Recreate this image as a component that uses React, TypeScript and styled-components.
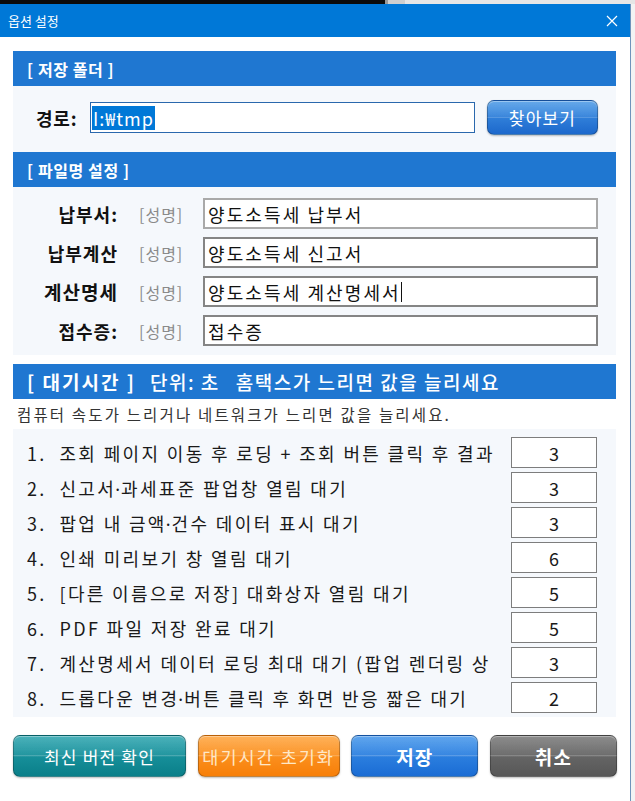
import React from "react";
import styled, { createGlobalStyle } from "styled-components";

const Global = createGlobalStyle`
  html, body { margin: 0; padding: 0; background: #f0f0f0; overflow: hidden; }
  body { font-family: "Noto Sans CJK KR", "Noto Sans", sans-serif; }
  * { box-sizing: border-box; }
`;

const KR = `"Noto Sans CJK KR", "Noto Sans", sans-serif`;

const Screen = styled.div`
  width: 635px;
  height: 801px;
  display: flex;
  flex-direction: column;
  background: #f3f3f3;
`;

const TopStrip = styled.div`
  height: 4px;
  display: flex;
`;

const StripDark = styled.div`
  width: 385px;
  background: #0b0b0b;
`;

const StripLight = styled.div`
  flex: 1;
  background: linear-gradient(90deg, #9a9a9a 0 3px, #cfcfcf 3px 20px, #e6e6e6 20px);
`;

const Window = styled.div`
  width: 631px;
  flex: 1;
  display: flex;
  flex-direction: column;
  background: #ffffff;
  border-right: 1px solid #6f93bb;
`;

const TitleBar = styled.div`
  height: 33px;
  background: #0078d7;
  display: flex;
  align-items: center;
  justify-content: space-between;
  padding: 0 12px 0 8px;
  color: #ffffff;
  font-family: ${KR};
  font-size: 13px;
`;

const CloseIcon = () => (
  <svg width="12" height="12" viewBox="0 0 12 12">
    <path d="M1 1 L11 11 M11 1 L1 11" stroke="#ffffff" strokeWidth="1.2" fill="none" />
  </svg>
);

const Body = styled.div`
  flex: 1;
  display: flex;
  flex-direction: column;
  padding: 14px 14px 0 13px;
`;

const SectionHeader = styled.div<{ $top?: number; $size?: number; $spacing?: number }>`
  height: 35px;
  flex: none;
  margin-top: ${(p) => p.$top ?? 0}px;
  background: #1f77d1;
  color: #ffffff;
  display: flex;
  align-items: center;
  padding-left: 14px;
  font-family: ${KR};
  font-size: ${(p) => p.$size ?? 16}px;
  font-weight: 700;
  letter-spacing: ${(p) => p.$spacing ?? 0.6}px;
  white-space: pre;
`;

const HeaderNote = styled.span<{ $gap: number }>`
  margin-left: ${(p) => p.$gap}px;
  font-weight: 500;
  letter-spacing: 1.5px;
`;

const Panel = styled.div`
  background: #f5f8fc;
  flex: none;
`;

const PathRow = styled(Panel)`
  display: flex;
  align-items: center;
  padding: 14px 18px 17px 23px;
`;

const PathLabel = styled.span`
  width: 54px;
  font-family: ${KR};
  font-size: 18px;
  font-weight: 700;
  letter-spacing: 0.8px;
  color: #111;
`;

const PathField = styled.div`
  width: 385px;
  height: 31px;
  background: #fff;
  border: 1px solid #2a68ad;
  display: flex;
  align-items: center;
  padding-left: 1px;
  font-family: ${KR};
  font-size: 18px;
  letter-spacing: 1px;
`;

const Selected = styled.span`
  background: #0078d7;
  color: #fff;
  line-height: 24px;
  padding: 0 1px;
`;

const GlossButton = styled.button<{ $from: string; $to: string; $w: number; $h: number; $ink?: string; $bold?: boolean; $size?: number; $spacing?: number }>`
  width: ${(p) => p.$w}px;
  height: ${(p) => p.$h}px;
  border: 1px solid rgba(0, 0, 0, 0.25);
  border-radius: 7px;
  background:
    linear-gradient(180deg, rgba(255,255,255,0.18) 0%, rgba(255,255,255,0.05) 48%, rgba(255,255,255,0.28) 49%, rgba(255,255,255,0) 52%, rgba(0,0,0,0) 100%),
    linear-gradient(180deg, ${(p) => p.$from}, ${(p) => p.$to});
  box-shadow: inset 0 1px 0 rgba(255,255,255,0.35), 0 1px 2px rgba(0,0,0,0.25);
  color: ${(p) => p.$ink ?? "#ffffff"};
  font-family: ${KR};
  font-size: ${(p) => p.$size ?? 17}px;
  font-weight: ${(p) => (p.$bold ? 700 : 400)};
  letter-spacing: ${(p) => p.$spacing ?? 1.2}px;
  padding: 0;
  white-space: nowrap;
  cursor: pointer;
`;

const BrowseButton = styled(GlossButton)`
  margin-left: 12px;
`;

const NameGrid = styled(Panel)`
  display: grid;
  grid-template-columns: 105px 45px 1fr;
  grid-auto-rows: 31px;
  column-gap: 20px;
  row-gap: 8px;
  align-items: center;
  padding: 11px 18px 9px 0;
`;

const NameLabel = styled.span<{ $size: number }>`
  justify-self: end;
  font-family: ${KR};
  font-size: ${(p) => p.$size}px;
  font-weight: 700;
  color: #111;
  letter-spacing: 1px;
  white-space: nowrap;
`;

const NameHint = styled.span`
  font-family: ${KR};
  font-size: 16px;
  color: #8a8a8a;
  letter-spacing: 1px;
  white-space: nowrap;
  margin-left: 1px;
`;

const NameField = styled.div<{ $light?: boolean }>`
  height: 31px;
  background: #fff;
  border: 2px solid ${(p) => (p.$light ? "#a9a9a9" : "#858585")};
  display: flex;
  align-items: center;
  padding-left: 3px;
  font-family: ${KR};
  font-size: 18px;
  color: #111;
  letter-spacing: 2.1px;
`;

const Caret = styled.span`
  display: inline-block;
  width: 1px;
  height: 20px;
  background: #111;
`;

const SubNote = styled.div`
  height: 30px;
  flex: none;
  display: flex;
  align-items: center;
  padding-left: 4px;
  font-family: ${KR};
  font-size: 15.5px;
  color: #333;
  letter-spacing: 2.15px;
  white-space: pre;
`;

const WaitList = styled(Panel)`
  display: flex;
  flex-direction: column;
  gap: 4px;
  padding: 8px 19px 4px 14px;
`;

const WaitRow = styled.div`
  display: flex;
  align-items: center;
  justify-content: space-between;
`;

const WaitLabel = styled.span`
  font-family: ${KR};
  font-size: 18px;
  color: #1a1a1a;
  letter-spacing: 2.35px;
  white-space: pre;
  overflow: hidden;
  width: 480px;
`;

/* narrow interpunct between paired words (e.g. 신고서·과세표준) */
const Dot = styled.span`
  font-family: "Noto Sans", sans-serif;
  letter-spacing: 0;
  margin: 0 1px 0 -1px;
`;

const WaitValue = styled.div`
  width: 86px;
  height: 31px;
  background: #fff;
  border: 1px solid #7d7d7d;
  display: flex;
  align-items: center;
  justify-content: center;
  font-family: ${KR};
  font-size: 18px;
  color: #1a1a1a;
`;

const ButtonBar = styled.div`
  display: flex;
  justify-content: space-between;
  padding: 18px 0 0 0;
  margin-right: -1px;
`;

const names = [
  { label: "납부서:", value: "양도소득세 납부서", light: true, size: 18 },
  { label: "납부계산", value: "양도소득세 신고서", size: 18 },
  { label: "계산명세", value: "양도소득세 계산명세서", caret: true, size: 19 },
  { label: "접수증:", value: "접수증", size: 18 },
];

const waits = [
  { label: "1.  조회 페이지 이동 후 로딩 + 조회 버튼 클릭 후 결과", value: 3 },
  { label: "2.  신고서·과세표준 팝업창 열림 대기", value: 3 },
  { label: "3.  팝업 내 금액·건수 데이터 표시 대기", value: 3 },
  { label: "4.  인쇄 미리보기 창 열림 대기", value: 6 },
  { label: "5.  [다른 이름으로 저장] 대화상자 열림 대기", value: 5 },
  { label: "6.  PDF 파일 저장 완료 대기", value: 5 },
  { label: "7.  계산명세서 데이터 로딩 최대 대기 (팝업 렌더링 상", value: 3 },
  { label: "8.  드롭다운 변경·버튼 클릭 후 화면 반응 짧은 대기", value: 2 },
];

const withDots = (text: string) =>
  text.split("·").flatMap((part, i) => (i === 0 ? [part] : [<Dot key={i}>·</Dot>, part]));

export default function App() {
  return (
    <>
      <Global />
      <Screen>
        <TopStrip>
          <StripDark />
          <StripLight />
        </TopStrip>
        <Window>
          <TitleBar>
            <span>옵션 설정</span>
            <CloseIcon />
          </TitleBar>
          <Body>
            <SectionHeader>[ 저장 폴더 ]</SectionHeader>
            <PathRow>
              <PathLabel>경로:</PathLabel>
              <PathField>
                <Selected>I:₩tmp</Selected>
              </PathField>
              <BrowseButton $from="#4496e6" $to="#1c68cc" $w={111} $h={35}>
                찾아보기
              </BrowseButton>
            </PathRow>

            <SectionHeader>[ 파일명 설정 ]</SectionHeader>
            <NameGrid>
              {names.map((n) => (
                <React.Fragment key={n.label}>
                  <NameLabel $size={n.size}>{n.label}</NameLabel>
                  <NameHint>[성명]</NameHint>
                  <NameField $light={n.light}>
                    {n.value}
                    {n.caret && <Caret />}
                  </NameField>
                </React.Fragment>
              ))}
            </NameGrid>

            <SectionHeader $top={9} $size={19} $spacing={2}>
              [ 대기시간 ]
              <HeaderNote $gap={14}>단위: 초</HeaderNote>
              <HeaderNote $gap={16}>홈택스가 느리면 값을 늘리세요</HeaderNote>
            </SectionHeader>
            <SubNote>컴퓨터 속도가 느리거나 네트워크가 느리면 값을 늘리세요.</SubNote>
            <WaitList>
              {waits.map((w) => (
                <WaitRow key={w.label}>
                  <WaitLabel>{withDots(w.label)}</WaitLabel>
                  <WaitValue>{w.value}</WaitValue>
                </WaitRow>
              ))}
            </WaitList>

            <ButtonBar>
              <GlossButton $from="#23a0ab" $to="#0a7f89" $w={173} $h={42}>
                최신 버전 확인
              </GlossButton>
              <GlossButton $from="#ffa035" $to="#f77f08" $w={142} $h={42} $ink="#ffe7c6" $size={17.5} $spacing={2}>
                대기시간 초기화
              </GlossButton>
              <GlossButton $from="#3d92ea" $to="#1a6cd4" $w={127} $h={42} $bold $size={19}>
                저장
              </GlossButton>
              <GlossButton $from="#737373" $to="#575757" $w={127} $h={42} $bold $size={19}>
                취소
              </GlossButton>
            </ButtonBar>
          </Body>
        </Window>
      </Screen>
    </>
  );
}
